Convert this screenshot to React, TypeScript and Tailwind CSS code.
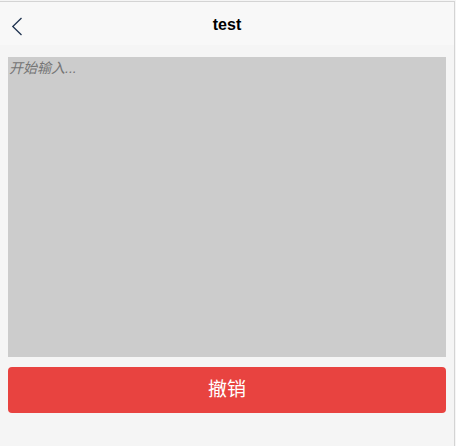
import React from "react";

export default function App() {
  return (
    <div className="w-[457px] h-[446px] bg-white flex" style={{ fontFamily: '"Liberation Sans", Arial, "Noto Sans CJK SC", sans-serif' }}>
      <div className="w-[456px] h-[446px] pt-[1px] flex flex-col bg-[#f5f5f5]">
        <div className="w-[455px] flex-1 flex flex-col border-t border-r border-[#d4d4d4] bg-[#f5f5f5]">
          <div className="h-[43px] relative flex items-center justify-center bg-[#f8f8f8] pt-[3px]">
            <svg className="absolute left-[11px] top-[15px]" width="12" height="19" viewBox="0 0 12 19" fill="none">
              <path d="M10.5 1 L1.8 9.5 L10.5 18" stroke="#1f3350" strokeWidth="1.3" />
            </svg>
            <span className="text-[16px] font-bold text-black leading-none">test</span>
          </div>
          <div className="px-[8px] pt-[12px] flex flex-col">
            <div className="h-[300px] bg-[#cccccc] pl-[1px] pt-[4px] text-[14px] leading-none">
              <span className="italic text-[14px] text-[#757575] leading-none">开始输入...</span>
            </div>
            <button className="mt-[10px] h-[46px] rounded-[4px] bg-[#e84340] text-white text-[19px] flex items-center justify-center">
              撤销
            </button>
          </div>
        </div>
      </div>
    </div>
  );
}
